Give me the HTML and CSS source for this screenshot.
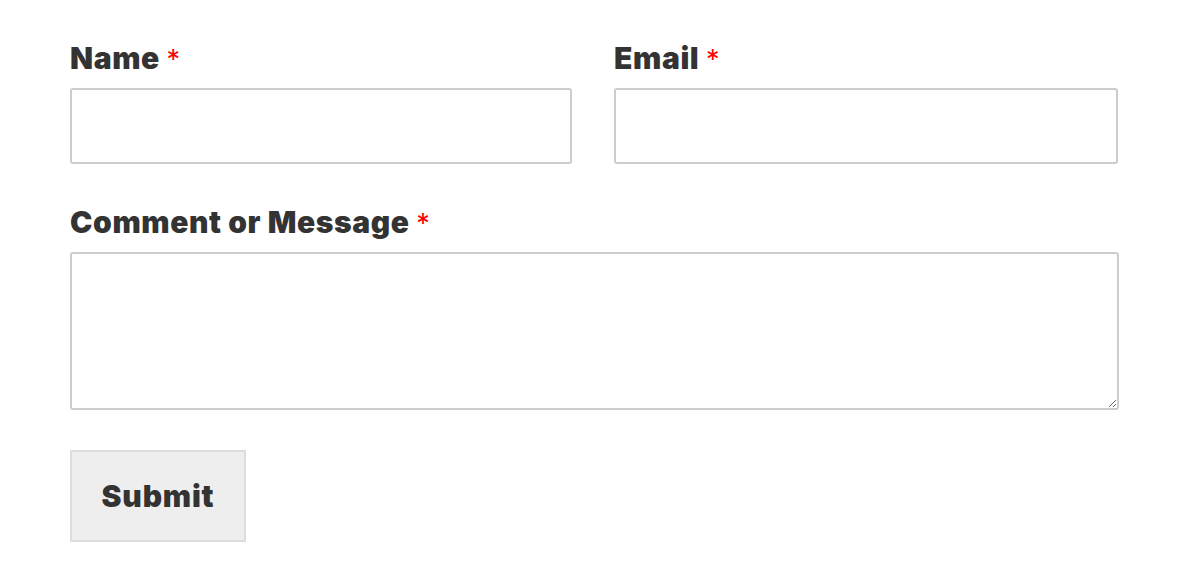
FILE: index.html
```html
<!DOCTYPE html>
<html lang="en">
<head>
    <meta charset="UTF-8">
    <title>Contact</title>
    <link rel="stylesheet" href="styles.css">
</head>
<body>

    <form class="contact-form">
        <div class="row">
            <div class="field">
                <label for="name">Name <span class="req">*</span></label>
                <input type="text" id="name">
            </div>
            <div class="field">
                <label for="email">Email <span class="req">*</span></label>
                <input type="email" id="email">
            </div>
        </div>

        <div class="field">
            <label for="message">Comment or Message <span class="req">*</span></label>
            <textarea id="message"></textarea>
        </div>

        <button type="submit">Submit</button>
    </form>

</body>
</html>
```

FILE: styles.css
```css
body {
    margin: 0;
    background: #fff;
    font-family: Inter, "Liberation Sans", sans-serif;
    color: #333;
}

.contact-form {
    width: 1049px;
    padding: 38px 0 0 70px;
}

.row {
    display: grid;
    grid-template-columns: 502px 504px;
    column-gap: 42px;
}

.row .field {
    margin-bottom: 38px;
}

.field {
    display: flex;
    flex-direction: column;
    margin-bottom: 40px;
}

label {
    display: block;
    height: 40px;
    font-size: 30px;
    font-weight: 900;
    letter-spacing: 0.6px;
    line-height: 40px;
    margin-bottom: 10px;
}

.req {
    color: #f00;
    font-weight: 400;
    font-size: 27px;
    line-height: 0;
}

input, textarea {
    box-sizing: border-box;
    border: 2px solid #ccc;
    border-radius: 3px;
    background: #fff;
    font-size: 18px;
}

input {
    height: 76px;
}

textarea {
    height: 158px;
    width: 1049px;
}

button {
    box-sizing: border-box;
    width: 176px;
    height: 92px;
    background: #eee;
    border: 2px solid #ddd;
    border-radius: 0;
    font-family: Inter, "Liberation Sans", sans-serif;
    font-size: 30px;
    font-weight: 900;
    letter-spacing: 0.8px;
    color: #333;
}
```
